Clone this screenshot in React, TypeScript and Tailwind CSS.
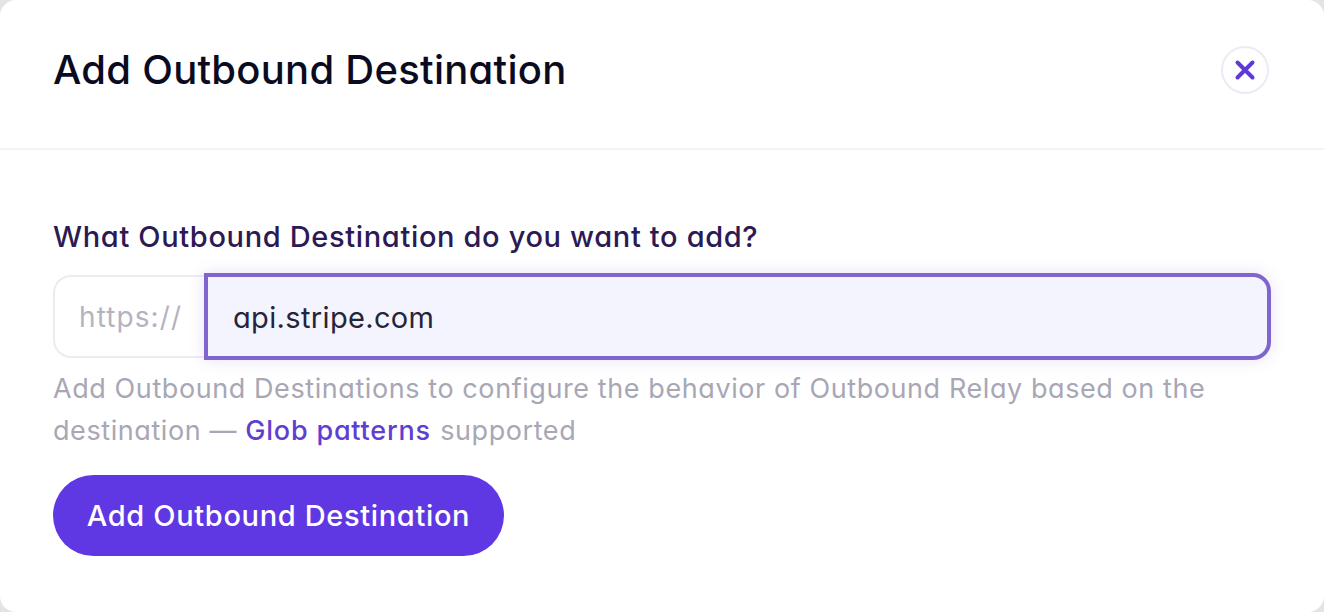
export default function App() {
  return (
    <div className="h-[612px] w-[1324px] overflow-hidden bg-[#e4e4e4] font-['Inter',sans-serif] [font-feature-settings:'cv11']">
      <div className="h-[612px] w-[1324px] rounded-[16px] bg-white">
        <header className="flex h-[150px] items-center justify-between border-b-2 border-[#f3f2fa] pb-[9px] pl-[53px] pr-[55px]">
          <h1 className="text-[40px] font-medium leading-[48px] tracking-[0.26px] text-[#0b0b1f]">Add Outbound Destination</h1>
          <button className="flex h-[48px] w-[48px] items-center justify-center rounded-full border-2 border-[#ecebf5] bg-white text-[#5f38d8]">
            <svg width="22" height="22" viewBox="0 0 22 22" fill="none" stroke="currentColor" strokeWidth="4" strokeLinecap="round">
              <path d="M3.5 3.5 L18.5 18.5 M18.5 3.5 L3.5 18.5" />
            </svg>
          </button>
        </header>
        <main className="pl-[53px] pr-[53px] pt-[69px]">
          <label className="block text-[29px] font-medium leading-[36px] tracking-[0.65px] text-[#2b1a54]">What Outbound Destination do you want to add?</label>
          <div className="mt-[18px] flex h-[87px] items-center">
            <span className="flex h-[83px] w-[151px] items-center rounded-l-[18px] border-2 border-r-0 border-[#ecebf3] bg-white pl-[24px] text-[28px] tracking-[1.1px] text-[#b4b3c0]">https://</span>
            <div className="flex h-[87px] flex-1 items-center rounded-r-[18px] border-4 border-[#8065cd] bg-[#f4f4fe] pt-[2px] pl-[25px] text-[29px] tracking-[0.35px] text-[#24243a] shadow-[0_0_16px_rgba(128,90,220,0.18)]">api.stripe.com</div>
          </div>
          <p className="mt-[8px] text-[27px] leading-[42px] tracking-[0.58px] text-[#a8a7b6]">
            Add Outbound Destinations to configure the behavior of Outbound Relay based on the<br />
            destination — <a className="font-medium tracking-[0.8px] text-[#5f3fd0]">Glob patterns</a> <span className="ml-px">supported</span>
          </p>
          <button className="mt-[23px] h-[81px] w-[451px] rounded-full bg-[#5f38e3] text-[29px] font-medium tracking-[0.65px] text-white">Add Outbound Destination</button>
        </main>
      </div>
    </div>
  );
}
